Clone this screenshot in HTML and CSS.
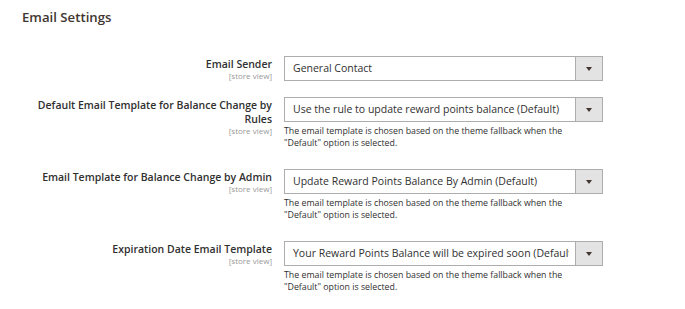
FILE: index.html
```html
<!DOCTYPE html>
<html>
<head>
<meta charset="utf-8">
<link rel="stylesheet" href="styles.css">
</head>
<body>
<div class="section">
  <h2 class="title">Email Settings</h2>
  <div class="rows">
    <div class="row">
      <div class="label"><span class="name">Email Sender</span><span class="scope">[store view]</span></div>
      <div class="control">
        <div class="select"><span class="value"><span class="text">General Contact</span></span><span class="btn"><span class="arrow"></span></span></div>
      </div>
    </div>
    <div class="row">
      <div class="label"><span class="name">Default Email Template for Balance Change by Rules</span><span class="scope">[store view]</span></div>
      <div class="control">
        <div class="select"><span class="value"><span class="text">Use the rule to update reward points balance (Default)</span></span><span class="btn"><span class="arrow"></span></span></div>
        <p class="note">The email template is chosen based on the theme fallback when the "Default" option is selected.</p>
      </div>
    </div>
    <div class="row">
      <div class="label"><span class="name">Email Template for Balance Change by Admin</span><span class="scope">[store view]</span></div>
      <div class="control">
        <div class="select"><span class="value"><span class="text">Update Reward Points Balance By Admin (Default)</span></span><span class="btn"><span class="arrow"></span></span></div>
        <p class="note">The email template is chosen based on the theme fallback when the "Default" option is selected.</p>
      </div>
    </div>
    <div class="row">
      <div class="label"><span class="name">Expiration Date Email Template</span><span class="scope">[store view]</span></div>
      <div class="control">
        <div class="select"><span class="value"><span class="text">Your Reward Points Balance will be expired soon (Default)</span></span><span class="btn"><span class="arrow"></span></span></div>
        <p class="note">The email template is chosen based on the theme fallback when the "Default" option is selected.</p>
      </div>
    </div>
  </div>
</div>
</body>
</html>
```
FILE: styles.css
```css
html, body {
  margin: 0;
  padding: 0;
  background: #fff;
}
body {
  font-family: "Open Sans", "Noto Sans", sans-serif;
  color: #303030;
}
.section {
  padding: 9px 0 0 22px;
}
.title {
  margin: 0;
  font-size: 13.2px;
  font-weight: 600;
  line-height: 17px;
  color: #41362f;
}
.rows {
  display: flex;
  flex-direction: column;
  gap: 16px;
  margin-top: 30px;
}
.row {
  display: flex;
  gap: 12px;
}
.label {
  width: 240px;
  margin-left: 10px;
  display: flex;
  flex-direction: column;
  align-items: flex-end;
  text-align: right;
  padding-top: 1px;
}
.name {
  font-size: 10.5px;
  font-weight: 600;
  line-height: 14px;
  color: #303030;
}
.scope {
  font-size: 8px;
  line-height: 10px;
  color: #999;
}
.control {
  width: 319px;
}
.select {
  display: flex;
  height: 25px;
  box-sizing: border-box;
  border: 1px solid #adadad;
  background: #fff;
}
.value {
  flex: 1;
  min-width: 0;
  display: flex;
  padding: 0 6px 0 8px;
}
.text {
  flex: 1;
  min-width: 0;
  font-size: 10.5px;
  line-height: 23px;
  white-space: nowrap;
  overflow: hidden;
  color: #303030;
}
.btn {
  width: 26px;
  flex: none;
  border-left: 1px solid #adadad;
  background: #e3e3e3;
  display: flex;
  align-items: center;
  justify-content: center;
}
.arrow {
  width: 0;
  height: 0;
  border-left: 3px solid transparent;
  border-right: 3px solid transparent;
  border-top: 4px solid #41362f;
}
.note {
  margin: 3px 0 0 0;
  padding: 0 25px 4px 0;
  font-size: 8.8px;
  line-height: 12px;
  color: #303030;
}
```
